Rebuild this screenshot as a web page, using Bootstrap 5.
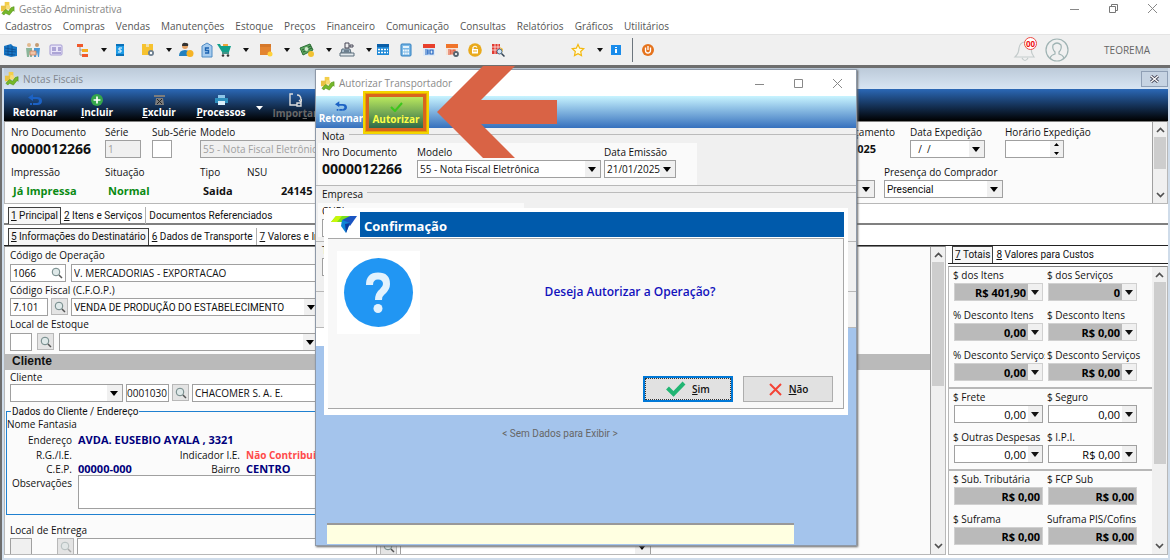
<!DOCTYPE html>
<html lang="pt-BR">
<head>
<meta charset="utf-8">
<meta name="viewport" content="width=device-width, initial-scale=1">
<title>Gestão Administrativa</title>
<link href="https://cdn.jsdelivr.net/npm/bootstrap@5.3.0/dist/css/bootstrap.min.css" rel="stylesheet">
<script src="https://cdn.jsdelivr.net/npm/bootstrap@5.3.0/dist/js/bootstrap.bundle.min.js"></script>
<style>
:root{--ui:"Open Sans","Noto Sans",sans-serif;--sys:Roboto,"Liberation Sans",sans-serif}
body{font:10px/16px var(--ui);color:#111;background:#fff}
svg{display:block;flex:none}
label,.lbl{display:block;line-height:16px;height:16px;white-space:nowrap}
.sys{font-family:var(--sys)}
button{border:0;background:none;padding:0;color:inherit}
/* shell */
.app-title{height:17px;color:#858585}
.app-menu{height:17px;gap:11px;padding-left:5px}
.app-menu a{color:#555;text-decoration:none}
.app-tools{height:31px;background:#f0f0f0;border-top:1px solid #e4e4e4}
.tool-grid{display:grid;grid-template-columns:23px 23px 27px 24px 13px 28px 24px 14px 21px 17px 25px 17px 24px 17px 25px 15px 25px 11px 23px 23px 23px 23px 23px 80px 25px 13px 24px 8px 16px;align-items:center;padding-left:2px}
.tri{width:0;height:0;border:4px solid transparent;border-top:5px solid #111;border-bottom:0}
.tool-grid .tri{border-width:3px;border-top-width:4px;border-bottom:0;margin-left:2px}
.wctl{gap:28px;color:#888;padding-right:12px}
/* main window */
.mdi{border-top:3px solid #6e6e6e;border-left:2px solid #6e6e6e;background:#fff}
.frame{border:2px solid #cfdcea;border-top:0}
.win-title{height:21px;background:linear-gradient(#bccad9,#d8e5f3);color:#82878e}
.win-bar{height:32px;background:linear-gradient(#2b68b6,#000);color:#fff;font-weight:700;padding-top:2px}
.win-bar button{width:62px;font-size:10px;font-weight:700;line-height:12px}
.xbtn{width:27px;height:16px;border:1px solid #8f9fb5!important;background:#c6d3e2!important}
.pane{background:#fbfbfb;border:1px solid #b8b8b8;border-top:1px solid #808080}
.fld{border:1px solid #a0a0a0;border-radius:0;background-color:#fff;height:18px;min-height:0;padding:0 2px;font:10px/15px var(--ui);color:#111}
.fld.sys{font-family:var(--sys)}
.fld.code{padding:0}
.fld:disabled{background-color:#f0f0f0;color:#a0a0a0}
select.fld{padding-right:14px;background:#fff url("data:image/svg+xml,%3Csvg xmlns='http://www.w3.org/2000/svg' width='15' height='16'%3E%3Crect width='15' height='16' fill='%23f0f0f0'/%3E%3Cpath d='M3 6h8l-4 5z' fill='%23000'/%3E%3C/svg%3E") right 0 center/15px 16px no-repeat}
select.fld.off{color:#a0a0a0;background-image:none;background-color:#f0f0f0}
.big{font-size:14px;font-weight:700;line-height:18px}
.mid{font-size:11px;font-weight:700;line-height:18px}
.second-line{padding-top:6px}
.second-line .mid{padding-top:2px}
.lens{width:17px;height:17px;background:#e4e4e4;border:1px solid #b8b8b8;display:flex;align-items:center;justify-content:center;flex:none}
.sbar{width:15px;background:#f0f0f0;border-left:1px solid #a0a0a0;color:#555}
.sbar i{display:block;background:#cdcdcd;width:12px}
.tabs-row{padding-left:4px;border-bottom:2px solid #808080;height:18px;font-family:var(--sys)}
.tabs-row button{padding:0 3px;line-height:16px;height:17px}
.tabs-row .on{border:1px solid #404040;border-bottom:0;background:#f6f6f6;padding:0 2px}
.tabs-row .sep{border-left:1px solid #b0b0b0}
.second{border-bottom:1px solid #222}
.navy{color:#00007c;font-weight:700;font-size:11px}
.addr{border:1px solid #1f80d0;position:relative;height:104px;margin:9px 0 0 1px;width:90%}
.addr legend{float:none;position:absolute;top:-8px;left:4px;width:auto;font:10px/16px var(--sys);background:#fbfbfb;padding:0 1px;margin:0}
.addr-grid{display:grid;grid-template-columns:65px 86px 70px 1fr;column-gap:6px;grid-template-rows:16px 15px 15px 13px 34px;padding-top:4px;align-items:center}
.band{height:16px;background:#bababa;font:bold 12px/15px "Liberation Sans",sans-serif;padding-left:7px;margin-top:3px}
.band+div label{height:14px;line-height:14px}
/* totals */
.tot{width:220px;flex:none}
.tot-grid{display:grid;grid-template-columns:90px 90px;column-gap:4px;padding:0 4px}
.money{height:18px;width:89px;display:flex;background:#bababa;border:1px solid #d0d0d0;margin-left:1px}
.money input{flex:1;min-width:0;border:0;background:transparent;text-align:right;padding:0 2px;font:bold 11px/15px var(--ui);color:#000}
.money button{width:14px;background:#f0f0f0;display:flex;align-items:center;justify-content:center}
.money.edit{background:#fff;border-color:#a0a0a0}
.money.edit input{font-weight:400}
.rule{height:2px;background:#b8b8b8}
.cell{height:40px}
.cell:nth-child(odd) label{width:92px;overflow:hidden}
/* transportador dialog */
.dlg{position:absolute;top:69px;left:315px;right:313px;bottom:14px;background:#f0f0f0;border:1px solid #8e99a8;box-shadow:1px 1px 2px #666}
.dlg-title{height:26px;background:#fff;color:#8a8a8a}
.dlg-bar{height:32px;background:linear-gradient(#c8f4ff,#3670bd)}
.dlg-bar button{font-weight:700;line-height:12px;color:#fff;height:32px}
.auth{width:66px;margin-top:-5px;height:43px!important;border:2px solid #f3d500;background:#e8a800}
.auth span{display:flex;flex-direction:column;align-items:center;justify-content:end;gap:1px;height:37px;margin:1px;padding-bottom:3px;border:3px solid #d9641e;background:linear-gradient(#b9e85e,#2f6a4a);color:#ffff46}
.grp{border-bottom:1px solid #b8b8b8}
.grp .inn{background:#fafafa}
.legend-line{height:15px;line-height:14px}
.legend-line hr{margin:0 0 3px 4px;flex:1;border-color:#bbb;opacity:1}
.confirm{position:absolute;top:138px;left:8px;right:8px;height:207px;background:#fff;padding:4px}
.confirm h1{font:bold 13px/28px var(--ui);background:#005aab;color:#fff;margin:0;height:25px;padding-left:4px;flex:1}
.confirm-body{border:1px solid #a8a8a8;border-left:0;background:#f8f8f8;height:171px;margin-top:1px}
.ask{font-size:12px;font-weight:600;color:#1212bd}
.choice{width:90px;height:26px;background:#e1e1e1;border:1px solid #adadad;display:flex;align-items:center;justify-content:center;gap:6px;font-size:10px;font-weight:600}
.choice.def{border:2px solid #0078d7;outline:1px dotted #333;outline-offset:-3px}
.pointer{position:absolute;left:121px;top:-5px}
.count{position:absolute;left:11px;top:-1px;width:13px;height:13px;border:1px solid #ee4b44;border-radius:50%;color:#e11;font-size:8px;line-height:11px;font-weight:700;text-align:center;background:#fff}
</style>
</head>
<body>
<svg width="0" height="0" class="position-absolute" aria-hidden="true">
<symbol id="logo" viewBox="0 0 16 16"><path d="M5 1h5v5H5z" fill="#f3ce4a"/><path d="M1 5h6v6H1z" fill="#e9c343"/><path d="M7 4l4 1v4H6z" fill="#f8dc77"/><path d="M2 13l4-4 3 2 3-4 3-1v5l-1-1-4 5-4-2-2 2z" fill="#76b82a" stroke="#4f8d17" stroke-width=".6"/></symbol>
<symbol id="mag" viewBox="0 0 12 12"><circle cx="5" cy="5" r="3.8" fill="#dfe9e9" stroke="#6e8585"/><path d="M8 8l3 3" stroke="#555" stroke-width="1.5"/></symbol>
<symbol id="up" viewBox="0 0 9 6"><path d="M1 5l3.500-3.500L8 5" fill="none" stroke="#505050" stroke-width="1.700"/></symbol>
<symbol id="dn" viewBox="0 0 9 6"><path d="M1 1l3.500 3.500L8 1" fill="none" stroke="#505050" stroke-width="1.700"/></symbol>
<symbol id="back" viewBox="0 0 14 12"><path d="M5 0L0 3.500 5 7V5h4q2 0 2 2t-2 2V11q5 0 5-4t-5-4H5z" fill="#1c62c4"/><path d="M2 10h2M5 10h2M7 10h2" stroke="#1c62c4" stroke-width="2"/></symbol>
</svg>
<div class="vh-100 d-flex flex-column overflow-hidden position-relative">
<header class="flex-shrink-0">
  <div class="app-title d-flex align-items-center">
    <svg width="15" height="15" class="ms-0 me-1"><use href="#logo"/></svg><span>Gestão Administrativa</span>
    <div class="ms-auto d-flex align-items-center wctl">
      <button type="button" aria-label="Minimizar"><svg width="11" height="11"><path d="M1 6.500h9" stroke="#888"/></svg></button>
      <button type="button" aria-label="Restaurar"><svg width="11" height="11" fill="none" stroke="#777"><path d="M1.500 3.500h6v6h-6zM3.500 3V1.500h6v6H8"/></svg></button>
      <button type="button" aria-label="Fechar"><svg width="11" height="11"><path d="M1 1l9 9M10 1l-9 9" stroke="#888"/></svg></button>
    </div>
  </div>
  <nav class="app-menu d-flex align-items-center"><a href="#">Cadastros</a><a href="#">Compras</a><a href="#">Vendas</a><a href="#">Manutenções</a><a href="#">Estoque</a><a href="#">Preços</a><a href="#">Financeiro</a><a href="#">Comunicação</a><a href="#">Consultas</a><a href="#">Relatórios</a><a href="#">Gráficos</a><a href="#">Utilitários</a></nav>
  <div class="app-tools d-flex align-items-stretch">
    <div class="tool-grid">
      <button type="button" aria-label="Empresas"><svg width="16" height="16"><path d="M2 4l7-2 2 2 4 1v9l-6 1-7-2z" fill="#1877c6"/><path d="M3 6l11 2M3 9l11 1M3 12l10 1M6 3v10M10 4v10" stroke="#0c4b8e" stroke-width=".8"/></svg></button>
      <button type="button" aria-label="Pessoas"><svg width="16" height="16"><circle cx="4" cy="3" r="2" fill="#e2b98e"/><circle cx="12" cy="3" r="2" fill="#c49b72"/><path d="M1 6h6v9H5V9L4 15H2z" fill="#8bb59a"/><path d="M9 6h6l-1 9h-1l-1-5-1 5H9z" fill="#4d9bd8"/><path d="M5 9h6v4H5z" fill="#f0c6a8" stroke="#cb7f5b" stroke-width=".8"/></svg></button>
      <button type="button" aria-label="Cartão"><svg width="16" height="16"><rect x="2" y="3" width="12" height="10" rx="1" fill="#e8e4f8" stroke="#a49bd3"/><path d="M4 6h4M4 8h4M10 6h3M10 8h3M4 11h9" stroke="#7064b3"/></svg></button>
      <button type="button" aria-label="Estrutura"><svg width="16" height="16"><path d="M5 4v9h5M5 8h4" stroke="#999" fill="none"/><path d="M2 2h6v3H2zM7 12h6v3H7z" fill="#f0592c"/><path d="M7 7h6v3H7z" fill="#f6ad1c"/></svg></button>
      <span class="tri"></span>
      <button type="button" aria-label="Documento"><svg width="16" height="16"><path d="M4 2h8v12H4z" fill="#1d9be6"/><path d="M4 2h8v2H4zM4 12h8v2H4z" fill="#0a70b8"/><path d="M10 6H7v2h2v2H6" fill="none" stroke="#fff"/></svg></button>
      <button type="button" aria-label="Produtos"><svg width="16" height="16"><path d="M2 2h11v11H2z" fill="#f6c22f"/><path d="M6 2h3v3H6z" fill="#f0dfa8"/><circle cx="11" cy="11" r="3" fill="#6d7f90"/><circle cx="11" cy="11" r="1.200" fill="#fff"/></svg></button>
      <span class="tri"></span>
      <button type="button" aria-label="Vendedor"><svg width="16" height="16"><circle cx="7" cy="4" r="3" fill="#e3a062"/><path d="M4 4q0-4 4-3 3 0 2 3z" fill="#333"/><path d="M1 14q0-6 6-6t6 6z" fill="#2180c0"/><circle cx="12" cy="11.500" r="3.500" fill="#f5b325"/></svg></button>
      <button type="button" aria-label="Banco"><svg width="16" height="16"><path d="M3 4l5-3 5 3v11H3z" fill="#a6cbee" stroke="#4d8ac4"/><path d="M10 6H6.500v2.500h3V11H6" fill="none" stroke="#1b62b0" stroke-width="1.400"/></svg></button>
      <button type="button" aria-label="Carrinho"><svg width="16" height="16"><path d="M1 2h3l1 2h10l-2 6H6z" fill="#12a08a"/><path d="M6 11h7" stroke="#0b7565" stroke-width="1.500"/><circle cx="7" cy="13.500" r="1.300" fill="#333"/><circle cx="12" cy="13.500" r="1.300" fill="#333"/><path d="M7 2h5v2H7z" fill="#f0a63a"/></svg></button>
      <span class="tri"></span>
      <button type="button" aria-label="Caixa"><svg width="16" height="16"><path d="M2 2h11v11H2z" fill="#e38430"/><path d="M2 2h11v3H2z" fill="#d5782a"/><circle cx="12" cy="12" r="2.500" fill="#ffd23b"/></svg></button>
      <span class="tri"></span>
      <button type="button" aria-label="Dinheiro"><svg width="16" height="16"><path d="M1 6l10-4 3 6-10 5z" fill="#5ba55f" stroke="#2c6f35"/><path d="M3 8l9-4M4 10l9-4" stroke="#26602f"/><circle cx="7.500" cy="7" r="2" fill="#cfe8cb"/><circle cx="12" cy="12" r="3" fill="#f1c232"/></svg></button>
      <span class="tri"></span>
      <button type="button" aria-label="Caixa registradora"><svg width="16" height="16"><path d="M3 7h8l1 4H2z" fill="#a9bccb" stroke="#5c6e7c"/><path d="M1 11h14v3H1z" fill="#e4eaee" stroke="#5c6e7c"/><path d="M6 1h4v5H6zM11 3h3v2h-3z" fill="#eee" stroke="#445"/><path d="M5 9h5" stroke="#345"/></svg></button>
      <span class="tri"></span>
      <button type="button" aria-label="Agenda"><svg width="16" height="16"><path d="M2 2h12v11H2z" fill="#1e88d6"/><path d="M2 2h12v3H2z" fill="#0b5fa8"/><path d="M3 7.500h10M3 10.500h10" stroke="#fff" stroke-width="1.500" stroke-dasharray="2 1"/></svg></button>
      <button type="button" aria-label="Calculadora"><svg width="16" height="16"><rect x="3" y="2" width="10" height="12" rx="1" fill="#7bb8e6" stroke="#2f7fc0"/><path d="M5 4h6v2H5z" fill="#e5f3fc"/><path d="M5 8.500h6M5 11.500h6" stroke="#fff" stroke-width="2" stroke-dasharray="1.500 .7"/></svg></button>
      <button type="button" aria-label="Calendário"><svg width="16" height="16"><path d="M2 2h12v12H2z" fill="#dfeaf6"/><path d="M2 2h12v4H2z" fill="#e8402c"/><path d="M4 8h3v4H4M4 10h3M9 8h3v4H9z" fill="none" stroke="#1f62c0" stroke-width="1.200"/></svg></button>
      <button type="button" aria-label="Configurar calendário"><svg width="16" height="16"><path d="M2 2h12v11H2z" fill="#f5e4d8"/><path d="M2 2h12v4H2z" fill="#f0742a"/><path d="M4 8h3v4H4M4 10h3M9 8h2v4H9z" fill="none" stroke="#e04a2a" stroke-width="1.200"/><circle cx="12" cy="12" r="2" fill="#fff" stroke="#56646f" stroke-width="1.800"/></svg></button>
      <button type="button" aria-label="Bloquear"><svg width="16" height="16"><circle cx="8" cy="8" r="6.800" fill="#e9aa1d"/><path d="M5 7h6v4.500H5z" fill="#fff"/><path d="M6 7V5.500q2-2.500 4 0" fill="none" stroke="#fff" stroke-width="1.200"/><path d="M6 9h4" stroke="#e9aa1d"/></svg></button>
      <button type="button" aria-label="Consulta"><svg width="16" height="16"><path d="M2 2h8v10H2z" fill="#e23b32"/><path d="M2 5h8M2 8h8M5 2v10M8 2v10" stroke="#fff" stroke-width=".7"/><path d="M10 5l3 2-1 4" fill="#f1b62e"/><circle cx="9.500" cy="9.500" r="2.500" fill="#cfe4f5" stroke="#4a6b88"/><path d="M11.500 11.500l3 3" stroke="#345" stroke-width="1.500"/></svg></button>
      <button type="button" aria-label="Favoritos"><svg width="16" height="16"><path d="M8 2.500l1.700 3.700 4 .5-3 2.800.8 4L8 11.600l-3.500 1.900.8-4-3-2.800 4-.5z" fill="#fffbe0" stroke="#f4b80c" stroke-width="1.200"/></svg></button>
      <span class="tri"></span>
      <button type="button" aria-label="Informações"><svg width="16" height="16"><path d="M3 3h10v10H3z" fill="#1a8ceb"/><path d="M7 5h2v1H7zM7 7h2v4H7z" fill="#fff"/></svg></button>
      <span class="border-start border-secondary" style="height:24px"></span>
      <button type="button" aria-label="Sair"><svg width="16" height="16"><circle cx="8" cy="8" r="6" fill="#e5731d"/><path d="M5.500 5.500v3a2.500 2.500 0 0 0 5 0v-3M8 4v4" fill="none" stroke="#fff" stroke-width="1.300"/></svg></button>
    </div>
    <div class="ms-auto d-flex align-items-center">
      <button type="button" class="position-relative me-2" aria-label="Notificações"><svg width="24" height="24" fill="none" stroke="#c3cbcb" stroke-width="1.200"><path d="M2 19q4-4 4-9 1-6 6-6t6 6q0 5 3 9zM9 20q3 5 6 0"/></svg><span class="count">00</span></button>
      <button type="button" aria-label="Usuário"><svg width="24" height="24" fill="none" stroke="#9fb3b3" stroke-width="1.200"><circle cx="12" cy="12" r="11"/><path d="M5 20q1-3 5-4v-2q-3-3-2-7 4-4 8 0 1 4-2 7v2q4 1 5 4"/></svg></button>
      <span style="color:#666;margin:0 20px 0 35px">TEOREMA</span>
    </div>
  </div>
</header>

<main class="mdi flex-grow-1 d-flex flex-column overflow-hidden">
<section class="frame flex-grow-1 d-flex flex-column overflow-hidden">
  <div class="win-title d-flex align-items-center flex-shrink-0"><svg width="15" height="15" class="ms-0 me-1"><use href="#logo"/></svg>Notas Fiscais
    <button type="button" class="xbtn ms-auto d-flex align-items-center justify-content-center" aria-label="Fechar janela"><svg width="9" height="8"><path d="M1 1l7 6M8 1L1 7" stroke="#445" stroke-width="3"/><path d="M1 1l7 6M8 1L1 7" stroke="#fff" stroke-width="1.200"/></svg></button></div>
  <div class="win-bar d-flex align-items-stretch flex-shrink-0">
    <button type="button" class="d-flex flex-column align-items-center justify-content-center"><svg width="14" height="12"><use href="#back"/></svg>Retornar</button>
    <button type="button" class="d-flex flex-column align-items-center justify-content-center"><svg width="14" height="12" viewBox="0 0 14 14"><circle cx="7" cy="7" r="7" fill="#35a64b"/><path d="M7 3v8M3 7h8" stroke="#fff" stroke-width="2"/></svg><span><u>I</u>ncluir</span></button>
    <button type="button" class="d-flex flex-column align-items-center justify-content-center"><svg width="13" height="12"><path d="M1 1h11v2H1zM3 4h7l1 7H2z" fill="#7c7c7c"/><path d="M4 5l5 5M9 5l-5 5" stroke="#222"/></svg><span><u>E</u>xcluir</span></button>
    <button type="button" class="d-flex flex-column align-items-center justify-content-center"><svg width="13" height="12"><path d="M3 1h7v3H3z" fill="#8ec6e8"/><path d="M0 4h13v5H0z" fill="#2d8fbd"/><path d="M3 7h7v4H3z" fill="#d8eefa"/></svg><span><u>P</u>rocessos</span></button>
    <span class="d-flex align-items-center pt-1 ps-1" style="width:14px"><svg width="8" height="5"><path d="M0 0h7L3.500 4z" fill="#fff"/></svg></span>
    <button type="button" class="d-flex flex-column align-items-center justify-content-center" style="width:58px;color:#686868"><svg width="13" height="14" fill="none" stroke="#ddd" stroke-width="1.400"><path d="M4 1H1v11h7M8 2q4 0 4 5M10 7l2 2 1-3M8 10h4v3H8z"/></svg><span>Impor<u>t</u>ar</span></button>
  </div>

  <div class="pane d-flex flex-shrink-0" style="height:83px">
    <div class="flex-grow-1 d-flex justify-content-between overflow-hidden" style="padding-top:2px">
      <div style="padding-left:6px">
        <div class="d-flex">
          <div style="width:94px"><span class="lbl">Nro Documento</span><div class="big">0000012266</div></div>
          <div style="width:47px"><label for="serie">Série</label><input id="serie" class="form-control fld" style="width:36px" value="1" disabled></div>
          <div style="width:48px"><label for="sub">Sub-Série</label><input id="sub" class="form-control fld" style="width:20px"></div>
          <div style="width:190px"><label for="mod">Modelo</label><select id="mod" class="form-select fld off"><option>55 - Nota Fiscal Eletrônica</option></select></div>
        </div>
        <div class="d-flex second-line">
          <div style="width:94px"><span class="lbl">Impressão</span><div class="mid" style="color:#0a8a12;padding-left:2px">Já Impressa</div></div>
          <div style="width:95px"><span class="lbl">Situação</span><div class="mid" style="color:#0a8a12;padding-left:3px">Normal</div></div>
          <div style="width:47px"><span class="lbl">Tipo</span><div class="mid" style="padding-left:3px">Saida</div></div>
          <div><span class="lbl">NSU</span><div class="mid" style="padding-left:34px">24145</div></div>
        </div>
      </div>
      <div style="width:362px">
        <div class="d-flex">
          <div style="width:120px"><span class="lbl text-end" style="padding-right:15px">Data Lançamento</span><div class="mid text-end" style="padding-right:34px">21/01/2025</div></div>
          <div style="width:95px"><label for="dexp">Data Expedição</label><select id="dexp" class="form-select fld" style="width:75px"><option>&nbsp; /&nbsp; /</option></select></div>
          <div><label for="hexp">Horário Expedição</label><div class="d-flex fld align-items-center justify-content-end" style="width:59px;padding:0"><input id="hexp" class="border-0 p-0 bg-transparent" style="width:40px"><svg width="13" height="16"><path d="M0 0h13v16H0z" fill="#f0f0f0"/><path d="M4 5h5L6.500 2zM4 11h5l-2.500 3z"/></svg></div></div>
        </div>
        <div class="d-flex second-line">
          <div style="width:94px"><span class="lbl"></span><select class="form-select fld" aria-label="Finalidade" style="width:85px"><option></option></select></div>
          <div><label for="pres">Presença do Comprador</label><select id="pres" class="form-select fld sys" style="width:119px"><option>Presencial</option></select></div>
        </div>
      </div>
    </div>
    <div class="sbar d-flex flex-column align-items-center" style="padding:5px 0"><svg width="9" height="6"><use href="#up"/></svg><i style="height:32px;margin:4px 0 auto"></i><svg width="9" height="6"><use href="#dn"/></svg></div>
  </div>

  <div class="tabs-row d-flex flex-shrink-0" style="margin-top:3px"><button class="on" type="button"><u>1</u> Principal</button><button type="button"><u>2</u> Itens e Serviços</button><button type="button" class="sep">Documentos Referenciados</button></div>
  <div class="tabs-row second d-flex flex-shrink-0" style="margin-top:3px"><button class="on" type="button"><u>5</u> Informações do Destinatário</button><button type="button"><u>6</u> Dados de Transporte</button><button type="button" class="sep"><u>7</u> Valores e Impostos</button></div>

  <div class="flex-grow-1 d-flex overflow-hidden" style="margin-bottom:3px;gap:2px;min-height:0">
    <div class="pane flex-grow-1 d-flex overflow-hidden">
      <div class="flex-grow-1 overflow-hidden">
        <div style="padding-left:5px">
          <label for="cop">Código de Operação</label>
          <div class="d-flex" style="gap:5px;padding-top:1px"><div class="fld d-flex align-items-center" style="width:56px"><input id="cop" class="border-0 p-0" style="width:38px" value="1066"><svg width="12" height="12"><use href="#mag"/></svg></div><input class="form-control fld" aria-label="Descrição da operação" style="width:300px" value="V. MERCADORIAS - EXPORTACAO"></div>
          <label for="cfop">Código Fiscal (C.F.O.P.)</label>
          <div class="d-flex" style="gap:3px"><input id="cfop" class="form-control fld" style="width:38px" value="7.101"><button type="button" class="lens" aria-label="Buscar CFOP"><svg width="12" height="12"><use href="#mag"/></svg></button><select class="form-select fld sys" aria-label="CFOP" style="width:249px"><option>VENDA DE PRODUÇÃO DO ESTABELECIMENTO</option></select></div>
          <label for="loc">Local de Estoque</label>
          <div class="d-flex" style="gap:5px;padding-top:1px"><input id="loc" class="form-control fld" style="width:22px"><button type="button" class="lens" aria-label="Buscar local"><svg width="12" height="12"><use href="#mag"/></svg></button><select class="form-select fld" aria-label="Local de Estoque" style="width:260px"><option></option></select></div>
        </div>
        <div class="band">Cliente</div>
        <div style="padding-left:5px">
          <label for="cli">Cliente</label>
          <div class="d-flex" style="gap:3px"><select id="cli" class="form-select fld" style="width:113px"><option></option></select><input class="form-control fld code" aria-label="Código do cliente" style="width:43px" value="0001030"><button type="button" class="lens" aria-label="Buscar cliente"><svg width="12" height="12"><use href="#mag"/></svg></button><input class="form-control fld" aria-label="Nome do cliente" style="width:300px" value="CHACOMER S. A. E."></div>
        </div>
        <fieldset class="addr"><legend>Dados do Cliente / Endereço</legend>
          <div class="addr-grid">
            <span class="text-nowrap">Nome Fantasia</span><span></span><span></span><span></span>
            <span class="text-end">Endereço</span><span class="navy text-nowrap">AVDA. EUSEBIO AYALA , 3321</span><span></span><span></span>
            <span class="text-end">R.G./I.E.</span><span></span><span class="text-end text-nowrap">Indicador I.E.</span><span class="fw-bold" style="color:#ff4a4a">Não Contribuinte</span>
            <span class="text-end">C.E.P.</span><span class="navy">00000-000</span><span class="text-end">Bairro</span><span class="navy">CENTRO</span>
            <label for="obs" class="text-end align-self-start">Observações</label><textarea id="obs" class="fld" style="grid-column:2/5;height:34px;resize:none;align-self:start"></textarea>
          </div>
        </fieldset>
        <div style="padding:7px 0 0 5px">
          <label for="ent">Local de Entrega</label>
          <div class="d-flex" style="gap:3px"><input id="ent" class="form-control fld" style="width:22px" disabled><button type="button" class="lens" style="margin-left:22px" aria-label="Buscar entrega"><svg width="12" height="12" opacity=".4"><use href="#mag"/></svg></button><input class="form-control fld" aria-label="Entrega" style="width:300px"><button type="button" class="lens" aria-label="Buscar endereço"><svg width="12" height="12"><use href="#mag"/></svg></button><select class="form-select fld" aria-label="Endereço de entrega" style="width:251px"><option></option></select></div>
        </div>
      </div>
      <div class="sbar d-flex flex-column align-items-center" style="padding:5px 0"><svg width="9" height="6"><use href="#up"/></svg><i class="mb-auto" style="height:124px;margin-top:4px"></i><svg width="9" height="6"><use href="#dn"/></svg></div>
    </div>

    <div class="tot d-flex flex-column">
      <div class="tabs-row second d-flex flex-shrink-0"><button class="on" type="button"><u>7</u> Totais</button><button type="button"><u>8</u> Valores para Custos</button></div>
      <div class="pane flex-grow-1 d-flex overflow-hidden" style="margin-top:2px">
        <div class="flex-grow-1 overflow-hidden">
          <div class="tot-grid">
            <div class="cell"><label for="t1">$ dos Itens</label><div class="money"><input id="t1" value="R$ 401,90"><button type="button" aria-label="Abrir"><span class="tri"></span></button></div></div>
            <div class="cell"><label for="t2">$ dos Serviços</label><div class="money"><input id="t2" value="0"><button type="button" aria-label="Abrir"><span class="tri"></span></button></div></div>
            <div class="cell"><label for="t3">% Desconto Itens</label><div class="money"><input id="t3" value="0,00"><button type="button" aria-label="Abrir"><span class="tri"></span></button></div></div>
            <div class="cell"><label for="t4">$ Desconto Itens</label><div class="money"><input id="t4" value="R$ 0,00"><button type="button" aria-label="Abrir"><span class="tri"></span></button></div></div>
            <div class="cell"><label for="t5">% Desconto Serviços</label><div class="money"><input id="t5" value="0,00"><button type="button" aria-label="Abrir"><span class="tri"></span></button></div></div>
            <div class="cell"><label for="t6">$ Desconto Serviços</label><div class="money"><input id="t6" value="R$ 0,00"><button type="button" aria-label="Abrir"><span class="tri"></span></button></div></div>
          </div>
          <div class="rule"></div>
          <div class="tot-grid">
            <div class="cell"><label for="t7">$ Frete</label><div class="money edit"><input id="t7" value="0,00"><button type="button" aria-label="Abrir"><span class="tri"></span></button></div></div>
            <div class="cell"><label for="t8">$ Seguro</label><div class="money edit"><input id="t8" value="0,00"><button type="button" aria-label="Abrir"><span class="tri"></span></button></div></div>
            <div class="cell"><label for="t9">$ Outras Despesas</label><div class="money edit"><input id="t9" value="0,00"><button type="button" aria-label="Abrir"><span class="tri"></span></button></div></div>
            <div class="cell"><label for="t10">$ I.P.I.</label><div class="money edit"><input id="t10" value="R$ 0,00"><button type="button" aria-label="Abrir"><span class="tri"></span></button></div></div>
          </div>
          <div class="rule"></div>
          <div class="tot-grid">
            <div class="cell"><label for="t11">$ Sub. Tributária</label><div class="money"><input id="t11" value="R$ 0,00"></div></div>
            <div class="cell"><label for="t12">$ FCP Sub</label><div class="money"><input id="t12" value="R$ 0,00"></div></div>
            <div class="cell"><label for="t13">$ Suframa</label><div class="money"><input id="t13" value="R$ 0,00"></div></div>
            <div class="cell"><label for="t14">Suframa PIS/Cofins</label><div class="money"><input id="t14" value="R$ 0,00"></div></div>
          </div>
        </div>
        <div class="sbar d-flex flex-column align-items-center border-0" style="padding:5px 0"><svg width="9" height="6"><use href="#up"/></svg><i class="mb-auto" style="height:182px;margin-top:4px"></i><svg width="9" height="6"><use href="#dn"/></svg></div>
      </div>
    </div>
  </div>
</section>
</main>

<section class="dlg d-flex flex-column" role="dialog" aria-label="Autorizar Transportador">
  <div class="dlg-title d-flex align-items-center flex-shrink-0"><svg width="15" height="15" class="ms-1 me-1"><use href="#logo"/></svg>Autorizar Transportador
    <div class="ms-auto d-flex" style="gap:28px;padding-right:13px">
      <button type="button" aria-label="Minimizar"><svg width="11" height="11"><path d="M1 6.500h9" stroke="#888"/></svg></button>
      <button type="button" aria-label="Maximizar"><svg width="11" height="11"><path d="M1.500 1.500h8v8h-8z" fill="none" stroke="#888"/></svg></button>
      <button type="button" aria-label="Fechar"><svg width="11" height="11"><path d="M1 1l9 9M10 1l-9 9" stroke="#888"/></svg></button>
    </div></div>
  <div class="dlg-bar d-flex flex-shrink-0">
    <button type="button" class="d-flex flex-column align-items-center justify-content-end pb-1" style="width:47px;padding-left:3px"><svg width="12" height="11"><use href="#back"/></svg>Retornar</button>
    <button type="button" class="auth"><span><svg width="13" height="10"><path d="M1 5l4 4 7-8" fill="none" stroke="#3cc61c" stroke-width="2"/></svg>Autorizar</span></button>
  </div>
  <div class="grp">
    <div class="legend-line d-flex align-items-center" style="padding-left:6px">Nota<hr></div>
    <div class="inn d-flex" style="width:379px;height:42px;margin:0 0 0 2px;padding:1px 4px">
      <div style="width:95px"><span class="lbl">Nro Documento</span><div class="big">0000012266</div></div>
      <div style="width:187px"><label for="dmod">Modelo</label><select id="dmod" class="form-select fld" style="width:184px"><option>55 - Nota Fiscal Eletrônica</option></select></div>
      <div><label for="demi">Data Emissão</label><select id="demi" class="form-select fld" style="width:72px"><option>21/01/2025</option></select></div>
    </div>
  </div>
  <div class="grp" style="height:56px">
    <div class="legend-line d-flex align-items-center" style="padding-left:6px">Empresa<hr></div>
    <div class="inn" style="width:206px;margin:2px 0 0 2px;padding-left:4px"><label for="cnpj">CNPJ</label><input id="cnpj" class="form-control fld" style="width:120px"></div>
  </div>
  <div class="grp" style="height:50px;padding-left:6px"><label for="tra">Transportador</label><input id="tra" class="form-control fld" style="width:120px"></div>
  <div class="grp" style="height:36px"></div>
  <div class="flex-grow-1 d-flex flex-column" style="background:#a4c4ec">
    <div class="bg-white" style="height:18px;width:60px"></div>
    <div class="flex-grow-1 text-center sys" style="color:#666;padding:80px 52px 0 0"><span>&lt; Sem Dados para Exibir &gt;</span></div>
    <input aria-label="Filtro" class="border-0" style="background:#ffffe1;box-shadow:0 -2px #999;height:19px;margin:0 62px 1px 11px">
  </div>
  <div class="confirm" role="alertdialog" aria-labelledby="ct">
    <div class="d-flex"><svg width="32" height="25" viewBox="0 0 32 25"><path d="M8 4h14l-5 6H3z" fill="#7be01d"/><path d="M3 10l5-6h6l-5 6z" fill="#c7f70b"/><path d="M14 8l8-4h7l-7 10z" fill="#1a55c2"/><path d="M14 8l8 3-4 10-5-7z" fill="#0e84d6"/><path d="M18 21l4-10-5 1z" fill="#0b3c9e"/></svg><h1 id="ct">Confirmação</h1></div>
    <div class="confirm-body d-flex flex-column">
      <div class="d-flex align-items-start" style="padding:12px 0 0 9px">
        <svg width="83" height="83"><path d="M0 0h83v83H0z" fill="#fff"/><circle cx="41.500" cy="41.500" r="34.500" fill="#2196f3"/><path d="M32.500 34q0-9 8.500-9t8.500 8q0 4-4 7.500-4 3-4 8.500" fill="none" stroke="#e3f2fd" stroke-width="7"/><circle cx="41" cy="57.500" r="4.500" fill="#e3f2fd"/></svg>
        <div class="flex-grow-1 text-center ask" style="padding:33px 3px 0 0">Deseja Autorizar a Operação?</div>
      </div>
      <div class="d-flex justify-content-end mt-auto" style="gap:10px;padding:0 10px 6px 0">
        <button type="button" class="choice def"><svg width="20" height="16"><path d="M1.500 7l6 6L18 2" fill="none" stroke="#21b573" stroke-width="4"/></svg><span><u>S</u>im</span></button>
        <button type="button" class="choice"><svg width="15" height="15"><path d="M2 2l11 11M13 2L2 13" stroke="#f44336" stroke-width="2"/></svg><span><u>N</u>ão</span></button>
      </div>
    </div>
  </div>
  <svg class="pointer" width="121" height="94" aria-hidden="true"><path d="M0 47L46 1h32L44 35h76v24H44l34 34H46z" fill="#d96345"/></svg>
</section>
</div>
</body>
</html>
